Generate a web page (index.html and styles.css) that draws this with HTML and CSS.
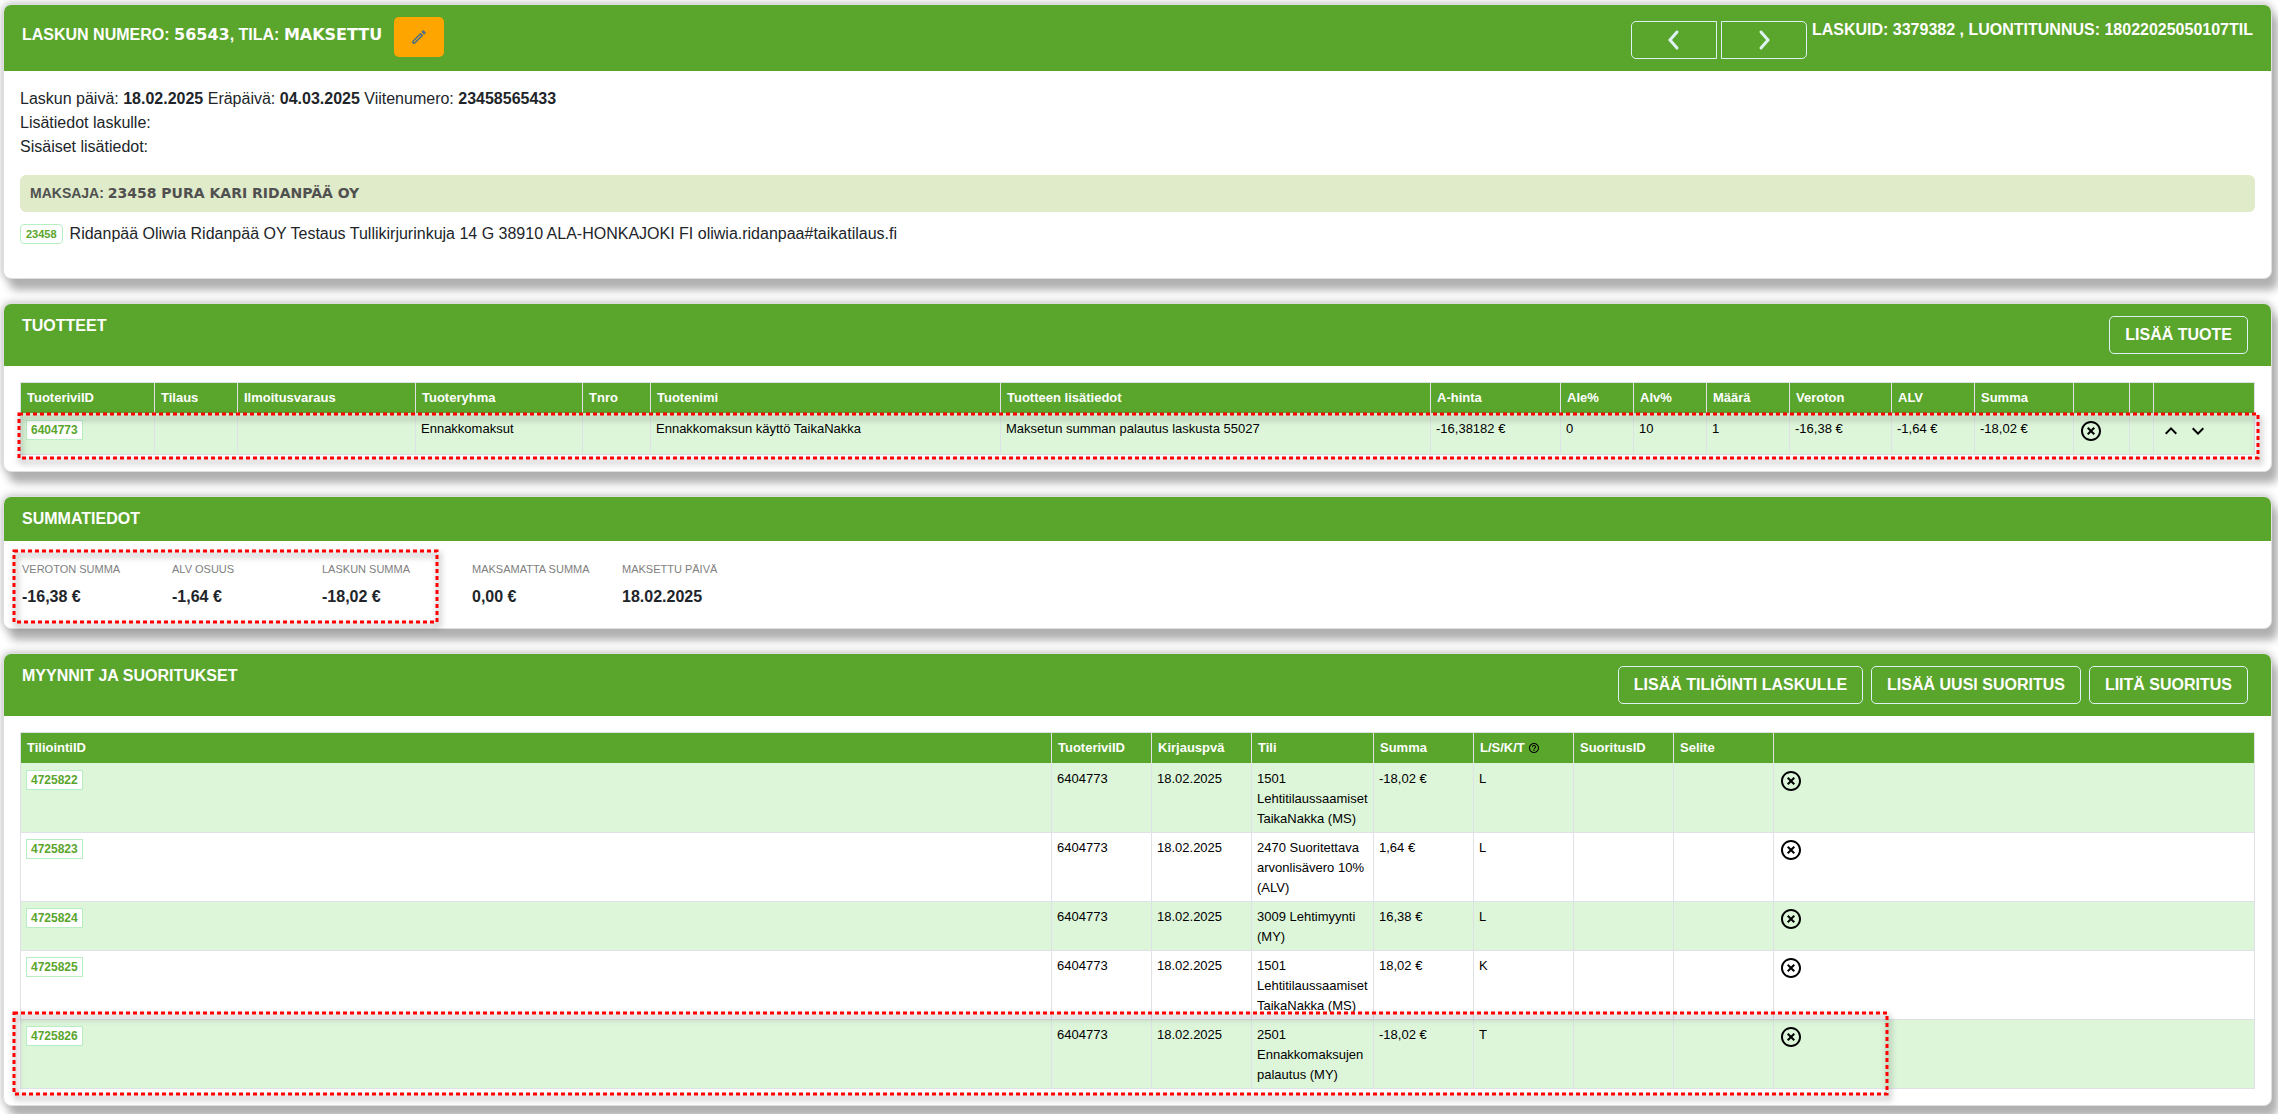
FILE: index.html
```html
<!DOCTYPE html>
<html lang="fi">
<head>
<meta charset="utf-8">
<meta name="viewport" content="width=device-width, initial-scale=1">
<title>Lasku 56543</title>
<link rel="stylesheet" href="styles.css">
</head>
<body>
<svg class="sprite" aria-hidden="true">
  <symbol id="remove" viewBox="0 0 24 24"><path d="M14.59 8L12 10.59 9.41 8 8 9.41 10.59 12 8 14.59 9.41 16 12 13.41 14.59 16 16 14.59 13.41 12 16 9.41 14.59 8zM12 2C6.47 2 2 6.47 2 12s4.47 10 10 10 10-4.47 10-10S17.53 2 12 2zm0 18c-4.41 0-8-3.59-8-8s3.59-8 8-8 8 3.59 8 8-3.59 8-8 8z"/></symbol>
  <symbol id="up" viewBox="0 0 24 24"><path d="M12 8l-6 6 1.41 1.41L12 10.83l4.59 4.58L18 14z"/></symbol>
  <symbol id="down" viewBox="0 0 24 24"><path d="M16.59 8.59L12 13.17 7.41 8.59 6 10l6 6 6-6z"/></symbol>
  <symbol id="edit" viewBox="0 0 24 24"><path d="M14.06 9.02l.92.92L5.92 19H5v-.92l9.06-9.06M17.66 3c-.25 0-.51.1-.7.29l-1.83 1.83 3.75 3.75 1.83-1.83c.39-.39.39-1.02 0-1.41l-2.34-2.34c-.2-.2-.45-.29-.71-.29zm-3.6 3.19L3 17.25V21h3.75L17.81 9.94l-3.75-3.75z"/></symbol>
  <symbol id="help" viewBox="0 0 24 24"><path d="M11 18h2v-2h-2v2zm1-16C6.48 2 2 6.48 2 12s4.48 10 10 10 10-4.48 10-10S17.52 2 12 2zm0 18c-4.41 0-8-3.59-8-8s3.59-8 8-8 8 3.59 8 8-3.59 8-8 8zm0-14c-2.21 0-4 1.79-4 4h2c0-1.1.9-2 2-2s2 .9 2 2c0 2-3 1.75-3 5h2c0-2.25 3-2.5 3-5 0-2.21-1.79-4-4-4z"/></symbol>
</svg>

<main class="page">
  <section class="card">
    <header class="card-header invoice-header">
      <h1 class="title">LASKUN NUMERO: <b class="heavy">56543</b>, TILA: <b class="heavy">MAKSETTU</b></h1>
      <button class="edit-button" type="button" aria-label="Muokkaa"><svg class="icon-edit"><use href="#edit"/></svg></button>
      <nav class="pager" aria-label="Laskut">
        <button class="outline-button previous" type="button" aria-label="Edellinen"><svg class="icon" viewBox="0 0 24 24"><path class="chevron" d="M15 4 8 12l7 8"/></svg></button>
        <button class="outline-button next" type="button" aria-label="Seuraava"><svg class="icon" viewBox="0 0 24 24"><path class="chevron" d="M9 4l7 8-7 8"/></svg></button>
      </nav>
      <p class="invoice-id">LASKUID: 3379382 , LUONTITUNNUS: 18022025050107TIL</p>
    </header>
    <div class="card-body">
      <p>Laskun päivä: <b>18.02.2025</b> Eräpäivä: <b>04.03.2025</b> Viitenumero: <b>23458565433</b></p>
      <p>Lisätiedot laskulle:</p>
      <p>Sisäiset lisätiedot:</p>
      <h2 class="payer">MAKSAJA: <b class="heavy">23458 PURA KARI RIDANPÄÄ OY</b></h2>
      <p class="payer-row"><a class="badge badge-small" href="#23458">23458</a><span>Ridanpää Oliwia Ridanpää OY Testaus Tullikirjurinkuja 14 G 38910 ALA-HONKAJOKI FI oliwia.ridanpaa#taikatilaus.fi</span></p>
    </div>
  </section>

  <section class="card">
    <header class="card-header">
      <h2 class="title">TUOTTEET</h2>
      <div class="actions"><button class="outline-button" type="button">LISÄÄ TUOTE</button></div>
    </header>
    <div class="card-body">
      <div class="marked">
        <table class="grid products">
          <colgroup><col class="w134"><col class="w83"><col class="w178"><col class="w167"><col class="w68"><col class="w350"><col><col class="w130"><col class="w73"><col class="w73"><col class="w83"><col class="w102"><col class="w83"><col class="w99"><col class="w56"><col class="w24"><col class="w101"></colgroup>
          <thead><tr><th>TuoteriviID</th><th>Tilaus</th><th>Ilmoitusvaraus</th><th>Tuoteryhma</th><th>Tnro</th><th>Tuotenimi</th><th>Tuotteen lisätiedot</th><th>A-hinta</th><th>Ale%</th><th>Alv%</th><th>Määrä</th><th>Veroton</th><th>ALV</th><th>Summa</th><th></th><th></th><th></th></tr></thead>
          <tbody><tr><td><a class="badge" href="#6404773">6404773</a></td><td></td><td></td><td>Ennakkomaksut</td><td></td><td>Ennakkomaksun käyttö TaikaNakka</td><td>Maksetun summan palautus laskusta 55027</td><td>-16,38182 €</td><td>0</td><td>10</td><td>1</td><td>-16,38 €</td><td>-1,64 €</td><td>-18,02 €</td><td><button class="icon-button" type="button" aria-label="Poista"><svg class="icon"><use href="#remove"/></svg></button></td><td></td><td><div class="move"><button class="icon-button" type="button" aria-label="Ylös"><svg class="icon"><use href="#up"/></svg></button><button class="icon-button" type="button" aria-label="Alas"><svg class="icon"><use href="#down"/></svg></button></div></td></tr></tbody>
        </table>
        <svg class="marker marker-product" aria-hidden="true"><rect width="100%" height="100%"/></svg>
      </div>
    </div>
  </section>

  <section class="card">
    <header class="card-header"><h2 class="title">SUMMATIEDOT</h2></header>
    <div class="marked">
      <dl class="summary">
        <div><dt>VEROTON SUMMA</dt><dd>-16,38 €</dd></div>
        <div><dt>ALV OSUUS</dt><dd>-1,64 €</dd></div>
        <div><dt>LASKUN SUMMA</dt><dd>-18,02 €</dd></div>
        <div><dt>MAKSAMATTA SUMMA</dt><dd>0,00 €</dd></div>
        <div><dt>MAKSETTU PÄIVÄ</dt><dd>18.02.2025</dd></div>
      </dl>
      <svg class="marker marker-summary" aria-hidden="true"><rect width="100%" height="100%"/></svg>
    </div>
  </section>

  <section class="card">
    <header class="card-header">
      <h2 class="title">MYYNNIT JA SUORITUKSET</h2>
      <div class="actions"><button class="outline-button" type="button">LISÄÄ TILIÖINTI LASKULLE</button><button class="outline-button" type="button">LISÄÄ UUSI SUORITUS</button><button class="outline-button" type="button">LIITÄ SUORITUS</button></div>
    </header>
    <div class="card-body">
      <div class="marked">
        <table class="grid">
          <colgroup><col><col class="w100"><col class="w100"><col class="w122"><col class="w100"><col class="w100"><col class="w100"><col class="w100"><col class="w481"></colgroup>
          <thead><tr><th>TiliointiID</th><th>TuoteriviID</th><th>Kirjauspvä</th><th>Tili</th><th>Summa</th><th>L/S/K/T <svg class="icon-help"><use href="#help"/></svg></th><th>SuoritusID</th><th>Selite</th><th></th></tr></thead>
          <tbody>
            <tr><td><a class="badge" href="#4725822">4725822</a></td><td>6404773</td><td>18.02.2025</td><td>1501 Lehtitilaussaamiset TaikaNakka (MS)</td><td>-18,02 €</td><td>L</td><td></td><td></td><td><button class="icon-button" type="button" aria-label="Poista"><svg class="icon"><use href="#remove"/></svg></button></td></tr>
            <tr><td><a class="badge" href="#4725823">4725823</a></td><td>6404773</td><td>18.02.2025</td><td>2470 Suoritettava arvonlisävero 10% (ALV)</td><td>1,64 €</td><td>L</td><td></td><td></td><td><button class="icon-button" type="button" aria-label="Poista"><svg class="icon"><use href="#remove"/></svg></button></td></tr>
            <tr><td><a class="badge" href="#4725824">4725824</a></td><td>6404773</td><td>18.02.2025</td><td>3009 Lehtimyynti (MY)</td><td>16,38 €</td><td>L</td><td></td><td></td><td><button class="icon-button" type="button" aria-label="Poista"><svg class="icon"><use href="#remove"/></svg></button></td></tr>
            <tr><td><a class="badge" href="#4725825">4725825</a></td><td>6404773</td><td>18.02.2025</td><td>1501 Lehtitilaussaamiset TaikaNakka (MS)</td><td>18,02 €</td><td>K</td><td></td><td></td><td><button class="icon-button" type="button" aria-label="Poista"><svg class="icon"><use href="#remove"/></svg></button></td></tr>
            <tr><td><a class="badge" href="#4725826">4725826</a></td><td>6404773</td><td>18.02.2025</td><td>2501 Ennakkomaksujen palautus (MY)</td><td>-18,02 €</td><td>T</td><td></td><td></td><td><button class="icon-button" type="button" aria-label="Poista"><svg class="icon"><use href="#remove"/></svg></button></td></tr>
          </tbody>
        </table>
        <svg class="marker marker-entry" aria-hidden="true"><rect width="100%" height="100%"/></svg>
      </div>
    </div>
  </section>
</main>
</body>
</html>
```
FILE: styles.css
```css
* { box-sizing: border-box; }

body {
  margin: 0;
  background: #fff;
  color: #212529;
  font: 16px/24px "Liberation Sans", Arial, sans-serif;
}

h1, h2, p, dl, dd { margin: 0; }

button {
  padding: 0;
  border: 0;
  background: none;
  font: inherit;
  color: inherit;
}

svg { display: block; fill: currentColor; }

.sprite { display: none; }

.page {
  display: flex;
  flex-direction: column;
  gap: 24px;
  padding: 4px 6px 8px 3px;
}

.card {
  border: 1px solid #dfdfdf;
  border-radius: 8px;
  background: #fff;
  box-shadow: 6px 11px 8px #b0b0b0, 0 0 8px #b0b0b0;
}

.card-header {
  display: flex;
  justify-content: space-between;
  align-items: flex-start;
  padding: 10px 23px 10px 18px;
  border-radius: 7px 7px 0 0;
  background: #5aa52c;
  color: #fff;
}

.title, .invoice-id {
  font-size: 16px;
  line-height: 24px;
  font-weight: 700;
}

.invoice-id { padding-top: 1px; }

.heavy { font-family: "Arial Black", "DejaVu Sans", sans-serif; font-weight: 900; }

.invoice-header {
  justify-content: flex-start;
  padding: 12px 18px;
}

.invoice-header .title { padding-top: 6px; }

.edit-button {
  display: grid;
  place-items: center;
  width: 50px;
  height: 40px;
  margin-left: 12px;
  border-radius: 5px;
  background: #ffa500;
  color: #456f8c;
}

.icon-edit { width: 18px; height: 18px; }

.pager {
  display: flex;
  gap: 4px;
  margin: 4px 5px 0 auto;
}

.pager .outline-button {
  display: grid;
  place-items: center;
  width: 86px;
  padding: 0;
}

.pager .previous { border-radius: 5px 0 0 5px; }
.pager .next { border-radius: 0 5px 5px 0; }

.chevron {
  fill: none;
  stroke: #def2f5;
  stroke-width: 3;
  stroke-linecap: round;
}

.actions { display: flex; gap: 8px; padding: 2px 0; }

.outline-button {
  height: 38px;
  padding: 0 15px;
  border: 1px solid #def2f5;
  border-radius: 5px;
  font-weight: 700;
}

.card-body { padding: 16px; }

.payer {
  margin: 16px 0 10px;
  padding: 8px 10px 9px;
  border-radius: 6px;
  background: #dfebc9;
  color: #505050;
  font-size: 14px;
  line-height: 20px;
}

.payer-row {
  display: flex;
  align-items: center;
  gap: 7px;
  padding-bottom: 16px;
}

.badge {
  display: inline-block;
  margin-top: 1px;
  padding: 0 4px;
  border: 1px solid #b8efc2;
  background: #fff;
  color: #5aa52c;
  font-size: 12px;
  line-height: 18px;
  font-weight: 700;
  text-decoration: none;
  vertical-align: top;
}

.badge-small {
  margin: 0;
  padding: 0 5px;
  border-radius: 4px;
  font-size: 11px;
}

.marked { position: relative; }

.grid {
  width: 100%;
  border-collapse: collapse;
  table-layout: fixed;
  color: #000;
  font-size: 13px;
  line-height: 20px;
}

.grid th, .grid td {
  padding: 5px 5px 3px;
  border: 1px solid #dee2e6;
  text-align: left;
  vertical-align: top;
}

.grid th {
  height: 30px;
  padding: 5px 4px 4px 6px;
  border-bottom: 0;
  background: #5aa52c;
  color: #fff;
  white-space: nowrap;
}

.grid td { border-top-color: #d9e8f5; }
.grid tbody tr:first-child td { padding-top: 6px; border-top: 0; }
.grid tbody tr:nth-child(odd) { background: #ddf6da; }
.products tbody tr { height: 42px; }

.icon { width: 24px; height: 24px; }
.icon-button { display: block; }
.move { display: flex; gap: 3px; }

.icon-help {
  display: inline-block;
  width: 12px;
  height: 12px;
  color: #000;
  vertical-align: -2px;
}

.w24 { width: 24px; }
.w56 { width: 56px; }
.w68 { width: 68px; }
.w73 { width: 73px; }
.w83 { width: 83px; }
.w99 { width: 99px; }
.w100 { width: 100px; }
.w101 { width: 101px; }
.w102 { width: 102px; }
.w122 { width: 122px; }
.w130 { width: 130px; }
.w134 { width: 134px; }
.w167 { width: 167px; }
.w178 { width: 178px; }
.w350 { width: 350px; }
.w481 { width: 481px; }

.summary {
  display: grid;
  grid-template-columns: repeat(5, 150px);
  padding: 18px 18px 19px;
}

.summary dt {
  color: #808080;
  font-size: 11px;
  line-height: 20px;
}

.summary dd {
  padding-top: 6px;
  font-weight: 700;
}

/* Dashed outlines drawn over the rows they point out */
.marker {
  position: absolute;
  overflow: visible;
  fill: none;
  stroke: #f00;
  stroke-width: 3;
  stroke-dasharray: 4 3;
  filter: drop-shadow(2px 4px 3px rgba(0, 0, 0, 0.5));
  pointer-events: none;
}

.marker-product {
  left: -1px;
  bottom: -3px;
  width: calc(100% + 4px);
  height: 44px;
}

.marker-summary {
  left: 10px;
  top: 10px;
  width: 423px;
  height: 71px;
}

.marker-entry {
  left: -6px;
  bottom: -5px;
  width: calc(100% - 362px);
  height: 81px;
}
```
